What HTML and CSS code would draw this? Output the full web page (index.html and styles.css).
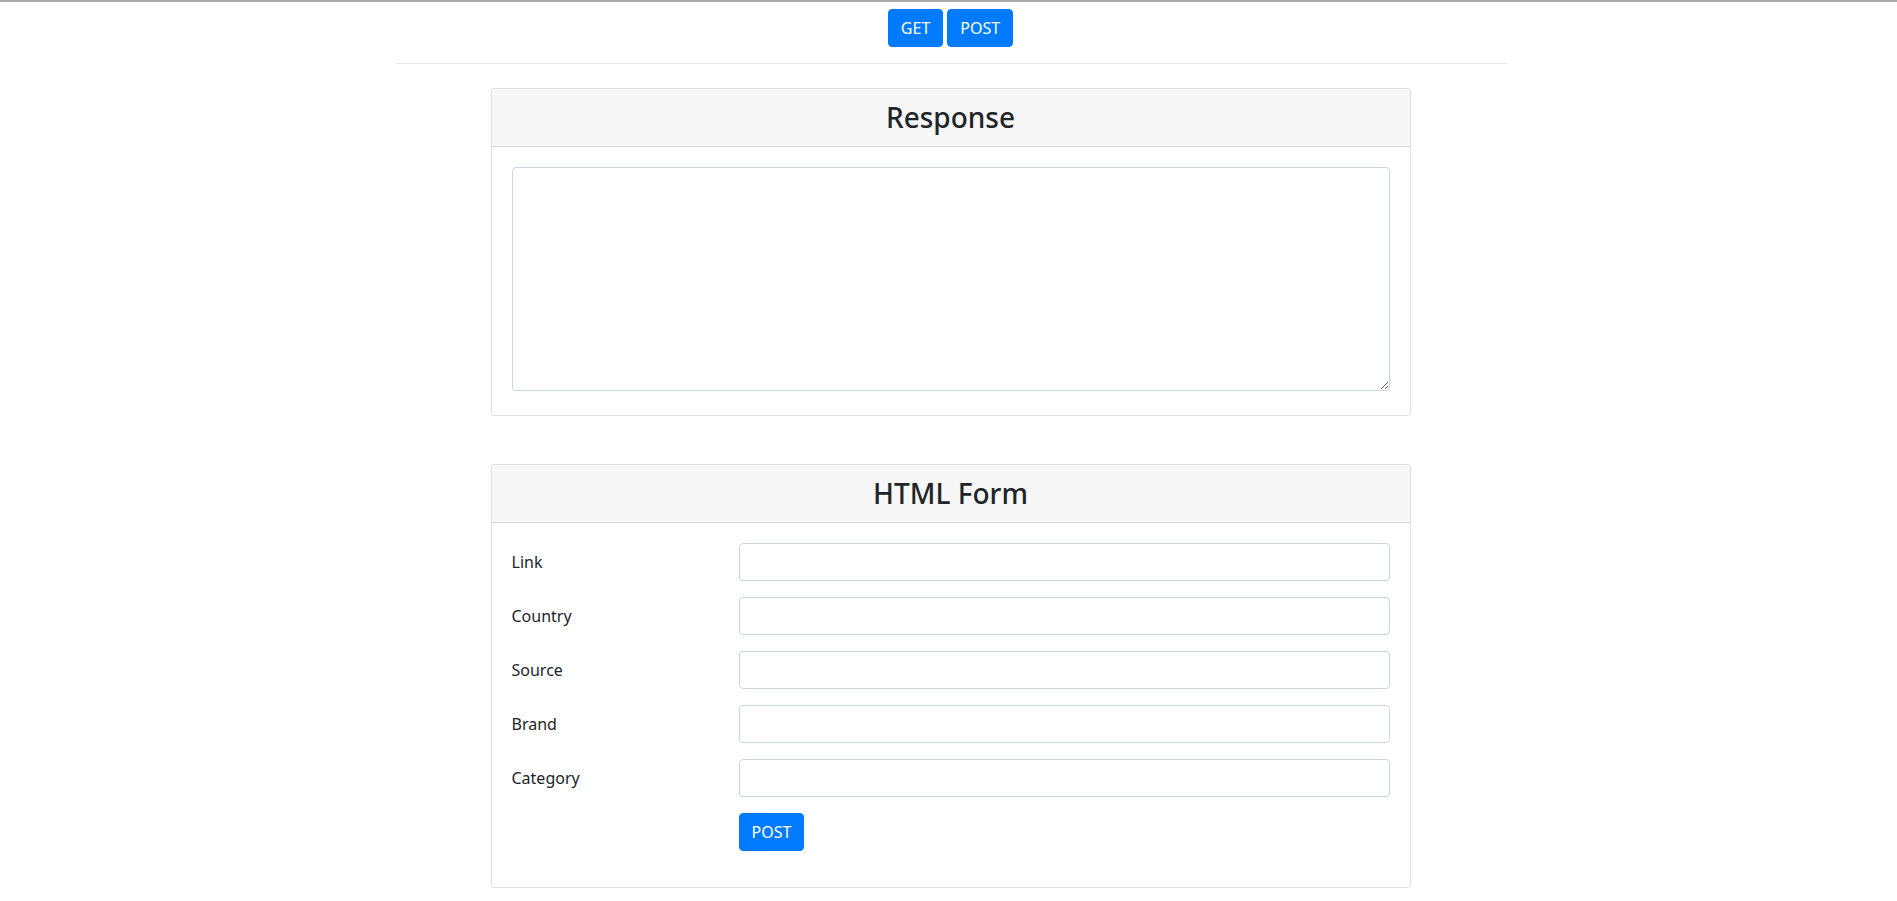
FILE: index.html
```html
<!DOCTYPE html>
<html lang="en">
<head>
<meta charset="utf-8">
<title>Form</title>
<link rel="stylesheet" href="styles.css">
</head>
<body>
<div class="container">
  <div class="top-actions">
    <button class="btn" type="button">GET</button>
    <button class="btn" type="button">POST</button>
  </div>
  <hr class="divider">
  <div class="cards">
    <section class="card card-response">
      <header class="card-header"><h3 class="card-title">Response</h3></header>
      <div class="card-body">
        <textarea class="response-box"></textarea>
      </div>
    </section>
    <section class="card">
      <header class="card-header"><h3 class="card-title">HTML Form</h3></header>
      <div class="card-body">
        <form class="form">
          <div class="form-row">
            <label class="form-label" for="link">Link</label>
            <input class="form-input" id="link" type="text">
          </div>
          <div class="form-row">
            <label class="form-label" for="country">Country</label>
            <input class="form-input" id="country" type="text">
          </div>
          <div class="form-row">
            <label class="form-label" for="source">Source</label>
            <input class="form-input" id="source" type="text">
          </div>
          <div class="form-row">
            <label class="form-label" for="brand">Brand</label>
            <input class="form-input" id="brand" type="text">
          </div>
          <div class="form-row">
            <label class="form-label" for="category">Category</label>
            <input class="form-input" id="category" type="text">
          </div>
          <div class="form-row">
            <span class="form-label"></span>
            <div><button class="btn" type="button">POST</button></div>
          </div>
        </form>
      </div>
    </section>
  </div>
</div>
</body>
</html>
```
FILE: styles.css
```css
* { box-sizing: border-box; }

html, body {
  margin: 0;
  padding: 0;
  background: #fff;
}

body {
  border-top: 2px solid #ababab;
  padding-left: 4px;
  font-family: "Noto Sans", "Open Sans", Arial, sans-serif;
  font-size: 16px;
  line-height: 1.5;
  color: #212529;
}

.container {
  width: 1110px;
  margin: 0 auto;
}

.top-actions {
  padding-top: 7px;
  text-align: center;
  font-size: 0;
}

.top-actions .btn + .btn { margin-left: 4px; }

.btn {
  display: inline-block;
  font-family: inherit;
  font-size: 16px;
  line-height: 24px;
  padding: 6px 12px;
  color: #fff;
  background: #007bff;
  border: 1px solid #007bff;
  border-radius: 4px;
  cursor: pointer;
}

.divider {
  margin: 16px 0 0;
  border: 0;
  border-top: 1px solid rgba(0,0,0,.1);
  height: 0;
}

.cards {
  padding: 24px 95px 0;
}

.card {
  border: 1px solid rgba(0,0,0,.125);
  border-radius: 4px;
  background: #fff;
}

.card-response { margin-bottom: 48px; }

.card-header {
  background: #f7f7f7;
  border-bottom: 1px solid rgba(0,0,0,.125);
  padding: 12px 20px;
  text-align: center;
  border-radius: 3px 3px 0 0;
}

.card-title {
  margin: 0;
  font-size: 28px;
  font-weight: 500;
  line-height: 33px;
}

.card-body {
  padding: 20px;
}

.response-box {
  display: block;
  width: 100%;
  height: 224px;
  margin: 0 0 4px;
  border: 1px solid #ced4da;
  border-radius: 4px;
  padding: 6px 12px;
  font-family: inherit;
  font-size: 16px;
  resize: vertical;
}

.form-row {
  display: grid;
  grid-template-columns: 197px 1fr;
  column-gap: 30px;
  margin-bottom: 16px;
}

.form-label {
  padding: 7px 0;
  line-height: 24px;
}

.form-input {
  display: block;
  width: 100%;
  height: 38px;
  border: 1px solid #ced4da;
  border-radius: 4px;
  padding: 6px 12px;
  font-family: inherit;
  font-size: 16px;
  background: #fff;
}
```
